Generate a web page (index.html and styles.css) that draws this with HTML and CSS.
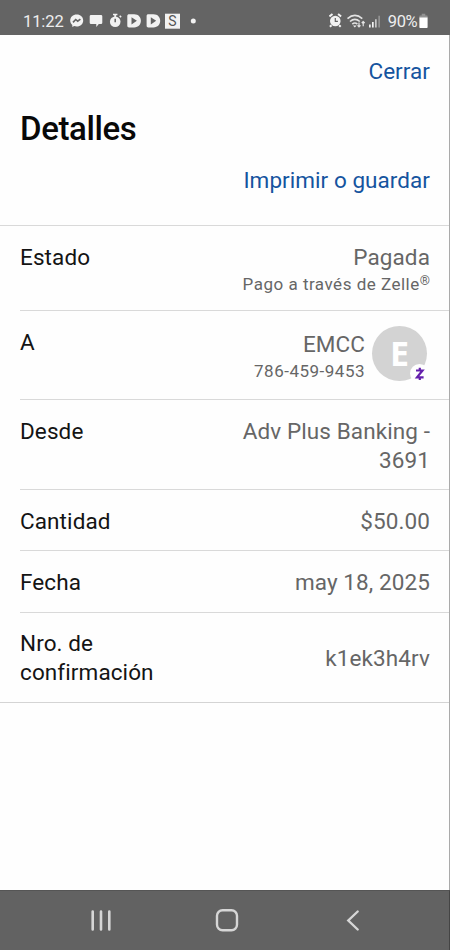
FILE: index.html
```html
<!DOCTYPE html>
<html lang="es">
<head>
<meta charset="utf-8">
<title>Detalles</title>
<link rel="stylesheet" href="styles.css">
</head>
<body>
<div class="screen">
  <header class="status">
    <div class="status-left">
      <span class="clock">11:22</span>
      <svg class="notifications" width="130" height="18" viewBox="0 0 130 18" fill="#f2f2f2">
        <path d="M6.700 2.500c-3.800 0-6.500 2.600-6.500 6 0 1.900.8 3.400 2.100 4.500v2l1.900-1c.8.3 1.600.4 2.500.4 3.800 0 6.500-2.600 6.500-6s-2.700-5.900-6.500-5.900z"/>
        <path d="M3 10.400 5.700 7.500 7.700 9.200 10.400 7.100" fill="none" stroke="#646464" stroke-width="1.600"/>
        <path d="M21 3h10q1.300 0 1.300 1.300v6.400q0 1.300-1.300 1.300h-2.200l-2.500 3v-3H21q-1.300 0-1.300-1.300V4.300q0-1.300 1.300-1.300z"/>
        <circle cx="45.200" cy="9.700" r="5.300"/>
        <path d="M43 1.700h4.400v1.600h-1.300v2h-1.800v-2H43zM49.100 4.200l1.200-1 1.400 1.500-1.200 1z"/>
        <path d="M45.200 6.700v3.500" stroke="#646464" stroke-width="1.500"/>
        <path id="play" fill-rule="evenodd" d="M59 2.200h5.200c4.300 0 6.700 2.900 6.700 6.600s-2.400 6.600-6.700 6.600H59c-1 0-1.700-.7-1.700-1.700V3.900c0-1 .7-1.700 1.700-1.700zm2.500 3v7.200l5.400-3.600z"/>
        <use href="#play" x="19.300"/>
        <path d="M95 1.700h15v15H95z"/>
        <text x="102.500" y="14.200" text-anchor="middle" class="letter">S</text>
        <circle cx="123.300" cy="9" r="2.500"/>
      </svg>
    </div>
    <div class="status-right">
      <svg width="54" height="18" viewBox="0 0 54 18" fill="#f2f2f2">
        <circle cx="6.300" cy="9" r="5.300"/>
        <path d="M.5 4.500 3.500 2M12.100 4.500 9.100 2M2.500 13.200.9 14.800M10.100 13.200l1.600 1.600" stroke="#f2f2f2" stroke-width="2"/>
        <path d="M6.300 6v3.300h2.600" fill="none" stroke="#646464" stroke-width="1.200"/>
        <g fill="none" stroke="#e4e4e4" stroke-width="1.600">
          <path d="M18.500 6.600q7.400-6.300 14.800 0M21 9.500q4.900-4.300 9.800 0M23.300 12.100q2.600-2.200 5.100 0"/>
          <path d="M30 10.500v4.300M28.500 13.300l1.500 1.500 1.500-1.500M34.200 14.200V9.500M32.700 11l1.500-1.500L35.700 11" stroke-width="1.200"/>
        </g>
        <path d="M24 13.400h3.600l-1.800 2z"/>
        <path d="M40 12.500h1.700v3H40zM43 10h1.700v5.500H43z"/>
        <path d="M46 7.300h1.700v8.200H46z" fill="#c8c8c8"/>
        <path d="M49.300 3.800H51v11.700h-1.700z" fill="#929292"/>
      </svg>
      <span class="percent">90%</span>
      <svg width="9" height="16" viewBox="0 0 9 16"><path d="M2.700.8h3.600v1.700H8q.6 0 .6.600V5H.4V3.100q0-.6.600-.6h1.700z" fill="#929292"/><path d="M.4 4.400h8.200v9.900q0 .7-.7.700H1.100q-.7 0-.7-.7z" fill="#fff"/></svg>
    </div>
  </header>

  <main>
    <div class="close"><a>Cerrar</a></div>
    <h1>Detalles</h1>
    <div class="print"><a>Imprimir o guardar</a></div>

    <div class="list">
      <div class="row state">
        <div class="label">Estado</div>
        <div class="value"><span class="paid">Pagada</span><small>Pago a través de Zelle<sup>®</sup></small></div>
      </div>
      <div class="row recipient">
        <div class="label">A</div>
        <div class="person">
          <div class="value"><span class="name">EMCC</span><small class="phone">786-459-9453</small></div>
          <div class="avatar">E
            <span class="badge"><svg width="12" height="16" viewBox="0 0 12 16" fill="none" stroke="#6420ad" stroke-width="2.200"><path d="M2 4.500H8.500L3 11.300H9.600M5.800 1.800v2.700M5.800 11.300V14"/></svg></span>
          </div>
        </div>
      </div>
      <div class="row account">
        <div class="label">Desde</div>
        <div class="value">Adv Plus Banking -<br>3691</div>
      </div>
      <div class="row">
        <div class="label">Cantidad</div>
        <div class="value">$50.00</div>
      </div>
      <div class="row">
        <div class="label">Fecha</div>
        <div class="value">may 18, 2025</div>
      </div>
      <div class="row confirmation">
        <div class="label">Nro. de<br>confirmación</div>
        <div class="value">k1ek3h4rv</div>
      </div>
    </div>
  </main>

  <nav>
    <svg width="450" height="60" viewBox="0 0 450 60" fill="none" stroke="#d6d6d6" stroke-linecap="round">
      <path d="M92.700 21.500v18M101 21.500v18M109.300 21.500v18" stroke-width="2.600"/>
      <rect x="217" y="20.300" width="20" height="20" rx="5.500" stroke-width="2.400"/>
      <path d="M357.700 21.500 348.300 30.500 357.700 39.500" stroke-width="2.400"/>
    </svg>
  </nav>
</div>
</body>
</html>
```
FILE: styles.css
```css
* { box-sizing: border-box; }

body {
  margin: 0;
  background: #fefefe;
  font-family: Roboto, sans-serif;
  color: #141414;
}

.screen {
  width: 450px;
  height: 950px;
  display: flex;
  flex-direction: column;
  overflow: hidden;
}

.status {
  height: 35px;
  flex: none;
  padding: 6px 21px 0 23px;
  display: flex;
  justify-content: space-between;
  background: #646464;
  color: #eee;
}

.status-left, .status-right {
  display: flex;
  align-items: center;
  height: 30px;
}

.status-right { margin-right: 1px; }
.status svg { flex: none; }
.clock { width: 47px; font-size: 16.500px; letter-spacing: -.1px; }
.letter { font: 14px Roboto, sans-serif; fill: #555; }
.percent { margin-left: 5px; margin-right: 2px; font-size: 16.500px; letter-spacing: -.5px; }

main {
  flex: 1;
  border-right: 1px solid #aaa;
}

a { color: #15549f; }

.close, .print {
  padding-right: 19px;
  text-align: right;
  font-size: 22.500px;
  line-height: 30px;
  letter-spacing: .05px;
}

.close { padding-top: 21px; }

h1 {
  margin: 22px 0 0 20px;
  font-size: 33px;
  line-height: 42px;
  font-weight: 500;
  letter-spacing: -.4px;
  color: #080808;
}

.print { margin-top: 15px; }

.list {
  margin-top: 30px;
  border-top: 1px solid #d9d9d9;
  border-bottom: 1px solid #d4d4d4;
  padding-left: 20px;
}

.row {
  display: flex;
  justify-content: space-between;
  height: 61.300px;
  padding: 16.600px 19px 0 0;
  border-bottom: 1px solid #d9d9d9;
  font-size: 22.500px;
  line-height: 29.300px;
  letter-spacing: .1px;
}

.value { color: #666; text-align: right; }
.value > span { display: block; }
small { display: block; font-size: 17px; line-height: 25px; letter-spacing: .5px; }
sup { font-size: 13px; line-height: 0; vertical-align: 5px; letter-spacing: 0; }

.state { height: 85px; }
.recipient { height: 89px; }
.recipient .value { padding-top: 2px; }
.account { height: 90px; }
.confirmation { height: 89.500px; border-bottom: 0; }
.confirmation .value { align-self: center; padding-bottom: 14px; }

.person { display: flex; gap: 7px; margin-right: 3px; }

.avatar {
  position: relative;
  width: 55px;
  height: 55px;
  margin-top: -1.600px;
  border-radius: 50%;
  background: #d3d3d3;
  color: #fff;
  font: 700 34px/55px "Open Sans", sans-serif;
  text-align: center;
}

.badge {
  position: absolute;
  right: -2px;
  bottom: -2px;
  width: 19px;
  height: 19px;
  border-radius: 50%;
  background: #fefefe;
  display: flex;
  align-items: center;
  justify-content: center;
}

nav {
  flex: none;
  height: 60px;
  background: #626262;
  border-top: 1px solid #555;
  border-right: 1px solid #444;
}

nav svg { display: block; margin-top: -1px; }
```
